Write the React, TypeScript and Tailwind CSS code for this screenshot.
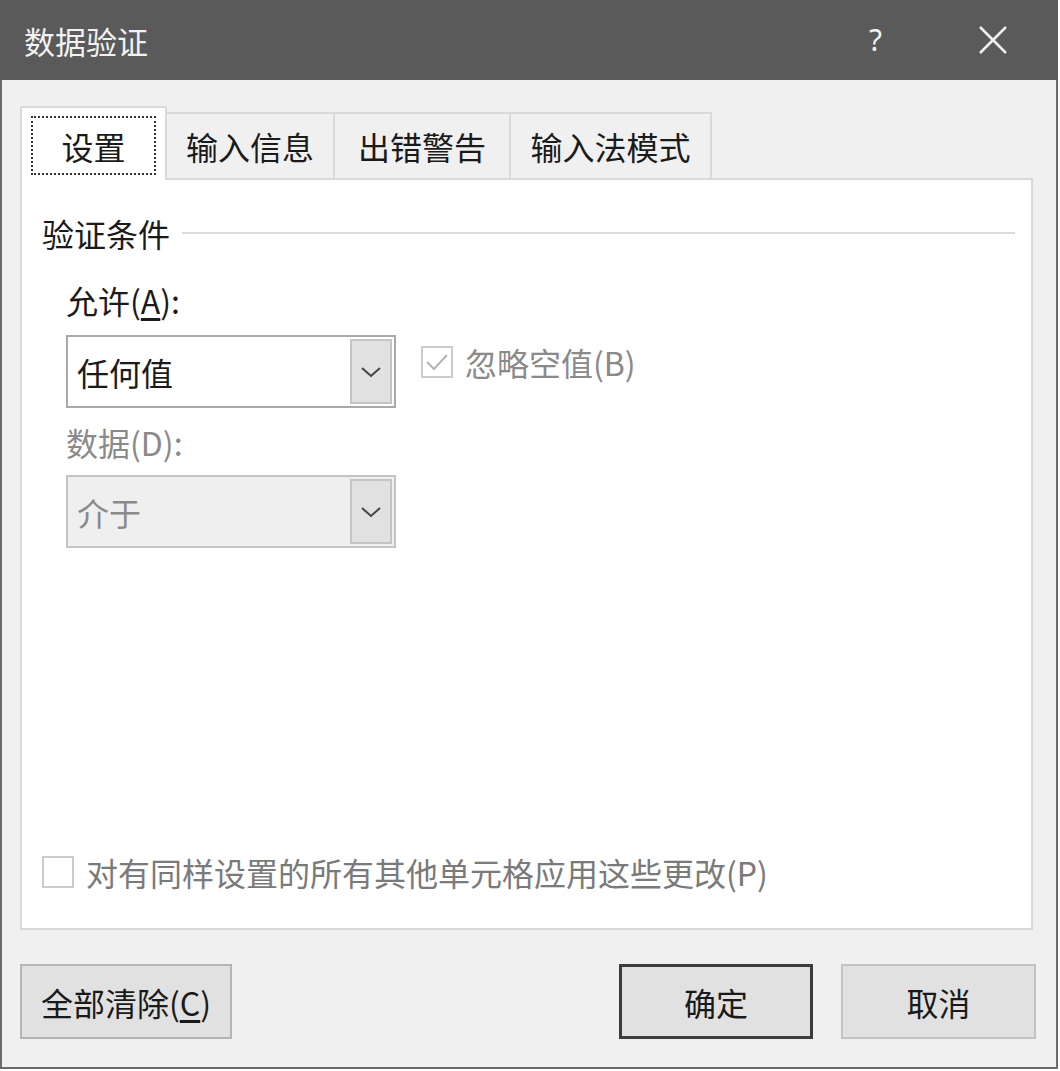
import React from "react";

const F = { fontFamily: '"Noto Sans CJK SC", "Noto Sans", sans-serif' };

function Chevron({ color = "#444" }: { color?: string }) {
  return (
    <svg width="22" height="12" viewBox="0 0 22 12" fill="none">
      <path d="M2 2 L11 10 L20 2" stroke={color} strokeWidth="2" />
    </svg>
  );
}

function Combo({ text, disabled }: { text: string; disabled?: boolean }) {
  return (
    <div
      className={`flex h-[73px] w-[330px] border-2 ${
        disabled ? "border-[#c4c4c4] bg-[#efefef]" : "border-[#a9a9a9] bg-white"
      }`}
    >
      <div
        className={`flex flex-1 items-center pl-[9px] text-[32px] ${
          disabled ? "text-[#8a8a8a]" : "text-[#1a1a1a]"
        }`}
      >
        {text}
      </div>
      <div className="m-[2px] ml-0 flex w-[42px] items-center justify-center border-2 border-[#c4c4c4] bg-[#e1e1e1]">
        <Chevron />
      </div>
    </div>
  );
}

function Check({ checked }: { checked?: boolean }) {
  return (
    <div className="flex h-[32px] w-[32px] items-center justify-center border-2 border-[#cccccc] bg-white">
      {checked && (
        <svg width="24" height="20" viewBox="0 0 24 20" fill="none">
          <path d="M2 10 L9 17 L22 3" stroke="#b4b4b4" strokeWidth="2" />
        </svg>
      )}
    </div>
  );
}

export default function App() {
  return (
    <div style={F} className="w-[1060px] h-[1071px] bg-white">
      <div className="flex h-[1069px] w-[1058px] flex-col border-x-2 border-b-2 border-[#6a6a6a] bg-[#f0f0f0]">
        {/* Title bar */}
        <div className="-mx-[2px] flex h-[80px] items-center bg-[#5a5a5a] pl-[24px] text-[#f2f2f2]">
          <div className="text-[31px] leading-none">数据验证</div>
          <div className="flex-1" />
          <div className="mr-[96px] text-[30px] leading-none" style={{ fontFamily: '"Noto Sans", sans-serif' }}>?</div>
          <svg width="30" height="30" viewBox="0 0 30 30" className="mr-[50px]">
            <path d="M2 2 L28 28 M28 2 L2 28" stroke="#f2f2f2" strokeWidth="2.5" />
          </svg>
        </div>

        {/* Tabs */}
        <div className="ml-[18px] mt-[26px] flex items-end">
          <div className="relative z-10 -mb-[2px] flex h-[74px] w-[147px] items-start justify-center border-x-2 border-t-2 border-[#d9d9d9] bg-white pt-[8px]">
            <div className="flex h-[59px] w-[125px] items-center justify-center border-2 border-dotted border-[#333] text-[32px] text-[#1a1a1a]">
              设置
            </div>
          </div>
          <div className="flex h-[66px] w-[168px] items-center justify-center border-r-2 border-t-2 border-[#d9d9d9] text-[32px] text-[#1a1a1a]">
            输入信息
          </div>
          <div className="flex h-[66px] w-[176px] items-center justify-center border-r-2 border-t-2 border-[#d9d9d9] text-[32px] text-[#1a1a1a]">
            出错警告
          </div>
          <div className="flex h-[66px] w-[201px] items-center justify-center border-r-2 border-t-2 border-[#d9d9d9] text-[32px] text-[#1a1a1a]">
            输入法模式
          </div>
        </div>

        {/* Panel */}
        <div className="ml-[18px] flex h-[752px] w-[1013px] flex-col border-2 border-[#d9d9d9] bg-white">
          <div className="mt-[35px] flex items-center pl-[20px]">
            <div className="text-[32px] leading-[36px] text-[#1a1a1a]">验证条件</div>
            <div className="ml-[12px] mr-[16px] h-[2px] flex-1 bg-[#dcdcdc]" />
          </div>
          <div className="mt-[31px] pl-[44px] text-[32px] leading-[36px] text-[#1a1a1a]">
            允许(<span className="underline underline-offset-4">A</span>):
          </div>
          <div className="mt-[17px] flex items-start pl-[44px]">
            <Combo text="任何值" />
            <div className="ml-[25px] mt-[9px] flex items-center">
              <Check checked />
              <div className="ml-[12px] text-[32px] leading-[36px] text-[#8a8a8a]">忽略空值(B)</div>
            </div>
          </div>
          <div className="mt-[16px] pl-[44px] text-[32px] leading-[36px] text-[#8a8a8a]">数据(D):</div>
          <div className="mt-[15px] pl-[44px]">
            <Combo text="介于" disabled />
          </div>
          <div className="flex-1" />
          <div className="mb-[38px] flex items-center pl-[20px]">
            <Check />
            <div className="ml-[12px] text-[32px] leading-[36px] text-[#7a7a7a]">
              对有同样设置的所有其他单元格应用这些更改(P)
            </div>
          </div>
        </div>

        {/* Buttons */}
        <div className="ml-[18px] mt-[34px] flex">
          <div className="flex h-[75px] w-[212px] items-center justify-center border-2 border-[#b5b5b5] bg-[#e1e1e1] text-[32px] text-[#1a1a1a]">
            全部清除(<span className="underline underline-offset-4">C</span>)
          </div>
          <div className="flex-1" />
          <div className="flex h-[75px] w-[194px] items-center justify-center border-[3px] border-[#3c3c3c] bg-[#e1e1e1] text-[32px] text-[#1a1a1a]">
            确定
          </div>
          <div className="ml-[28px] mr-[20px] flex h-[75px] w-[195px] items-center justify-center border-2 border-[#c2c2c2] bg-[#e1e1e1] text-[32px] text-[#1a1a1a]">
            取消
          </div>
        </div>
      </div>
    </div>
  );
}
